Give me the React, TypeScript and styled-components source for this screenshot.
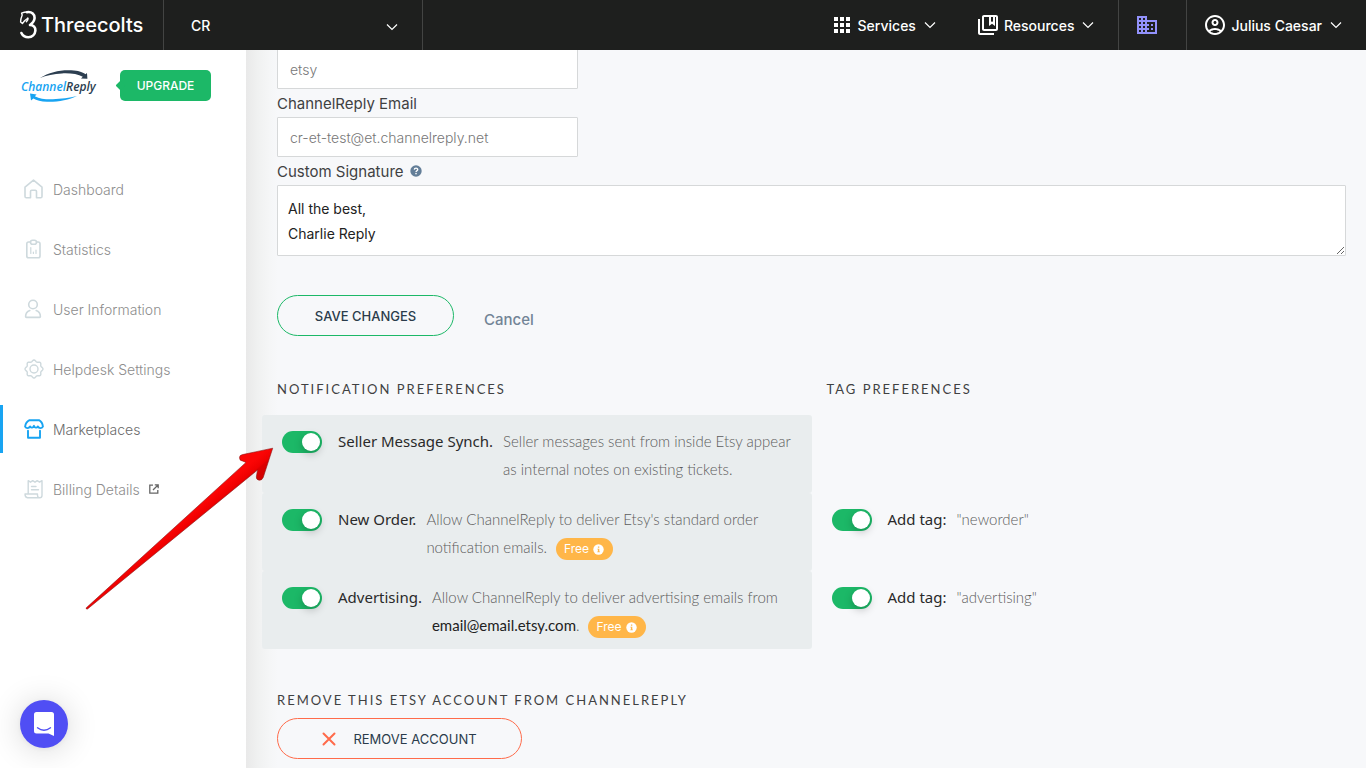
import React from 'react';
import styled, { createGlobalStyle } from 'styled-components';
import { MdApps, MdOutlineCollectionsBookmark, MdBusiness, MdOutlineAccountCircle } from 'react-icons/md';

const GlobalStyle = createGlobalStyle`
  *, *::before, *::after { box-sizing: border-box; }
  body { margin: 0; background: #f7f8fa; color: #333; font-family: Inter, "Liberation Sans", sans-serif; font-size: 14px; }
  button, input, select, textarea { font: inherit; color: inherit; margin: 0; }
  button { cursor: pointer; background: none; border: 0; padding: 0; }
  h2 { margin: 0; }
`;

const Page = styled.div`
  position: relative;
  min-height: 100vh;
  display: flex;
  flex-direction: column;
`;

const Header = styled.header`
  position: sticky;
  top: 0;
  z-index: 2;
  height: 50px;
  display: flex;
  background: #1e1f1e;
  color: #fff;
  font-weight: 500;
`;

const Brand = styled.a`
  width: 164px;
  display: flex;
  align-items: center;
  gap: 3px;
  padding-left: 19px;
  border-right: 1px solid #434443;
  color: inherit;
  font-size: 20px;
  text-decoration: none;
`;

const WorkspacePicker = styled.div`
  position: relative;
  width: 259px;
  border-right: 1px solid #434443;

  svg { position: absolute; right: 24px; top: 23px; pointer-events: none; }
`;

const WorkspaceSelect = styled.select`
  appearance: none;
  width: 100%;
  height: 100%;
  padding: 0 27px;
  border: 0;
  background: transparent;
  outline: none;
`;

const HeaderMenus = styled.nav`
  flex: 1;
  display: flex;
  justify-content: flex-end;
  gap: 40px;
  padding-right: 24px;
`;

const HeaderButton = styled.button<{ $boxed?: boolean }>`
  display: flex;
  align-items: center;
  gap: 4px;
  font-weight: 500;
  white-space: nowrap;
  ${({ $boxed }) => $boxed && 'padding: 0 24px 0 16px; border-left: 1px solid #434443;'}

  svg:last-child { margin-left: 4px; }
`;

const CompanyButton = styled.button`
  width: 68px;
  display: flex;
  align-items: center;
  padding-left: 16px;
  border-left: 1px solid #434443;
  color: #9291fb;
`;

const Body = styled.div`
  flex: 1;
  display: flex;
`;

const Sidebar = styled.aside`
  width: 246px;
  flex-shrink: 0;
  padding-top: 20px;
  background: #fff;
`;

const SidebarTop = styled.div`
  display: flex;
  gap: 20px;
  padding-left: 20px;
`;

const UpgradeButton = styled.button`
  position: relative;
  width: 91px;
  height: 31px;
  border-radius: 5px;
  background: #1cb867;
  color: #fff;
  font-size: 12px;
  font-weight: 500;

  &::before {
    content: '';
    position: absolute;
    left: -3px;
    top: 12px;
    width: 7px;
    height: 7px;
    border-radius: 1px;
    background: inherit;
    transform: rotate(45deg);
  }
`;

const NavList = styled.nav`
  display: flex;
  flex-direction: column;
  gap: 12px;
  margin-top: 63px;
`;

const NavLink = styled.a<{ $active?: boolean }>`
  height: 48px;
  display: flex;
  align-items: center;
  gap: 9px;
  padding-left: 21px;
  border-left: 3px solid ${({ $active }) => ($active ? '#18a4f2' : 'transparent')};
  color: ${({ $active }) => ($active ? '#6a6a6a' : '#8d8d8d')};
  font-weight: 300;
  text-decoration: none;

  > svg:first-child { color: ${({ $active }) => ($active ? '#18a4f2' : '#ced9dd')}; }
`;

const Main = styled.main`
  flex: 1;
  min-width: 0;
  margin-top: -1px;
  padding: 0 20px 9px 31px;
  background: linear-gradient(to right, #e9e9e9 0, #f0f1f1 12px, #f5f6f7 24px, #f7f8fa 32px);
`;

const TextInput = styled.input`
  display: block;
  width: 301px;
  height: 40px;
  padding: 0 12px;
  border: 1px solid #d6d8d9;
  border-radius: 1px;
  background: #fff;
  color: #777;
  font-weight: 300;
`;

const FieldLabel = styled.label`
  display: flex;
  align-items: center;
  gap: 6px;
  height: 28px;
  color: #3f4142;
  font-size: 15px;
`;

const SignatureBox = styled.textarea`
  display: block;
  width: 100%;
  height: 71px;
  padding: 10px;
  border: 1px solid #d6d8d9;
  border-radius: 1px;
  background: #fff;
  color: #222;
  line-height: 25px;
  overflow: hidden;
`;

const FormActions = styled.div`
  display: flex;
  align-items: flex-end;
  gap: 30px;
  margin-top: 39px;
`;

const PillButton = styled.button<{ $danger?: boolean }>`
  width: ${({ $danger }) => ($danger ? '245px' : '177px')};
  height: 41px;
  display: flex;
  align-items: center;
  justify-content: center;
  gap: 17px;
  border: 1px solid ${({ $danger }) => ($danger ? '#ff6b4a' : '#1cb867')};
  border-radius: 21px;
  color: #2b3c4b;
  font-size: 13px;
  font-weight: ${({ $danger }) => ($danger ? 400 : 500)};
`;

const CancelLink = styled.a`
  color: #728496;
  font-size: 15px;
  font-weight: 500;
  line-height: 32px;
  text-decoration: none;
`;

const SectionTitle = styled.h2`
  color: #3f4142;
  font-family: Lato, "Liberation Sans", sans-serif;
  font-size: 13px;
  font-weight: 400;
  line-height: 28px;
  letter-spacing: 2px;
  text-transform: uppercase;
`;

const Preferences = styled.section`
  display: grid;
  grid-template-columns: 1fr 1fr;
  margin: 39px -15px 37px;

  ${SectionTitle} { padding: 0 15px; margin-bottom: 12px; }
`;

const PreferenceCell = styled.div<{ $shaded?: boolean }>`
  min-height: 78px;
  display: flex;
  align-items: flex-start;
  padding: 12px 15px 10px 20px;
  border-radius: 3px;
  background: ${({ $shaded }) => ($shaded ? '#e9edee' : 'transparent')};
  line-height: 28px;
`;

const Toggle = styled.input`
  appearance: none;
  flex-shrink: 0;
  width: 40px;
  height: 22px;
  margin: 4px 16px 0 0;
  padding: 2px;
  border-radius: 11px;
  background: #1cb867;
  cursor: pointer;

  &::before {
    content: '';
    display: block;
    width: 18px;
    height: 18px;
    margin-left: 18px;
    border-radius: 50%;
    background: #fff;
    box-shadow: 0 3px 8px rgba(0, 0, 0, 0.22);
  }
  &:not(:checked) { background: #c4cbcf; }
  &:not(:checked)::before { margin-left: 0; }
`;

const PreferenceName = styled.label`
  margin-right: 10px;
  color: #2a2a2a;
  font-family: "Noto Sans", "Liberation Sans", sans-serif;
  font-size: 15px;
  white-space: nowrap;
`;

const Description = styled.div`
  color: #5c5c5c;
  font-family: Lato, "Liberation Sans", sans-serif;
  font-size: 15px;
  font-weight: 300;

  strong { color: #222; font-weight: 400; }
`;

const FreeBadge = styled.span`
  display: inline-flex;
  align-items: center;
  gap: 4px;
  height: 22px;
  margin-left: 9px;
  padding: 0 9px 0 8px;
  border-radius: 11px;
  background: #ffb648;
  color: #fff;
  font-family: Inter, "Liberation Sans", sans-serif;
  font-size: 12px;
  font-weight: 400;
  line-height: 22px;
  vertical-align: middle;
`;

const RemoveSection = styled.section`
  display: flex;
  flex-direction: column;
  align-items: flex-start;
  gap: 4px;
`;

const ChatButton = styled.button`
  position: fixed;
  left: 20px;
  bottom: 20px;
  z-index: 3;
  width: 48px;
  height: 48px;
  display: flex;
  align-items: center;
  justify-content: center;
  border-radius: 50%;
  background: #504ef4;
  box-shadow: 0 1px 6px rgba(0, 0, 0, 0.06), 0 2px 32px rgba(0, 0, 0, 0.16);
`;

const PointerArrow = styled.svg`
  position: absolute;
  left: 80px;
  top: 440px;
  z-index: 1;
  pointer-events: none;
`;

const Chevron = () => (
  <svg width="12" height="8" viewBox="0 0 12 8" fill="none" stroke="currentColor" strokeWidth="1.2" aria-hidden="true">
    <path d="M1 1.5l5 5 5-5" />
  </svg>
);

const HorseMark = () => (
  <svg width="19" height="30" viewBox="0 0 19 30" fill="none" stroke="#fff" strokeLinecap="round" strokeLinejoin="round" aria-hidden="true">
    <path strokeWidth="1.4" d="M8.500 2C6.500 1.800 4.700 2.300 2.600 3.200L3.200 5C2.200 7.500 1.600 9.600 1.600 12L3.400 13.600 5.600 10.800 8.800 8.200" />
    <path strokeWidth="2.6" d="M8 2.200C13 1.400 15.800 4.600 15.600 8c-.2 3-1.800 5-4.600 7 3.600 0 5.600 2.600 5.400 5.600-.4 3.800-3.200 6.600-7 6.600-3.400 0-5.800-1.600-7-4.200" />
    <path strokeWidth="1.6" d="M8.800 8.200C9.200 9.400 8.600 10.600 7.400 11.600" />
  </svg>
);

const ChannelReplyLogo = () => (
  <svg width="80" height="32" viewBox="0 0 80 32" role="img" aria-label="ChannelReply">
    <path fill="#2c3e50" d="M20 8C30 2 42-.6 54 .6c6 .6 9 2 11.400 3.600L67 3l.4 5.800-6.400-.4 1.800-1.600C58 4 50 3 42 3.400 34 3.800 26 5.400 20 8z" />
    <path fill="#18a4f2" d="M57 26c-8 4-20 6.200-30 5.800-6-.3-10.600-1.600-13.600-3.400L11 30.600 10 23.400l6.600 1-1.800 1.800c5 2.600 11 3.200 18 3 8-.2 17-1.400 24.200-3.200z" />
    <text x="1" y="21" fontFamily='"Open Sans", sans-serif' fontSize="12" fontWeight="600" fontStyle="italic">
      <tspan fill="#18a4f2">Channel</tspan>
      <tspan fill="#2c3e50">Reply</tspan>
    </text>
  </svg>
);

const NavIcon = ({ children }: { children: React.ReactNode }) => (
  <svg width="20" height="20" viewBox="0 0 20 20" fill="none" stroke="currentColor" strokeWidth="1.6" strokeLinecap="round" strokeLinejoin="round" aria-hidden="true">
    {children}
  </svg>
);

const gear = Array.from({ length: 65 }, (_, i) => {
  const angle = (i / 64) * Math.PI * 2;
  const radius = 8.2 + 0.8 * Math.cos(angle * 8);
  return `${(10 + radius * Math.cos(angle)).toFixed(2)},${(10 + radius * Math.sin(angle)).toFixed(2)}`;
}).join(' ');

const navItems = [
  {
    label: 'Dashboard',
    icon: <path d="M1 8.200L9.500 1.200 18 8.200V17.500q0 1.300-1.300 1.300H12.500V12.500q0-1.200-1.200-1.200H7.700q-1.200 0-1.200 1.200V18.800H2.300Q1 18.800 1 17.500z" />,
  },
  {
    label: 'Statistics',
    icon: (
      <>
        <path d="M6.500 3H4.600Q2.800 3 2.800 4.800V17q0 1.800 1.800 1.800h9.600q1.800 0 1.800-1.800V4.800Q16 3 14.200 3h-1.700" />
        <rect x="6.500" y="1.300" width="6" height="4" rx="2" />
        <path strokeWidth="1.200" d="M6.800 8.500v6M9.400 13v1.500M12 11v3.500" />
      </>
    ),
  },
  {
    label: 'User Information',
    icon: (
      <>
        <circle cx="9" cy="5.500" r="4.300" />
        <path d="M5.800 11.500C3 12.500 1.600 14.500 1.600 17.500q0 .9.900.9h13q.9 0 .9-.9c0-3-1.400-5-4.200-6" />
      </>
    ),
  },
  {
    label: 'Helpdesk Settings',
    icon: (
      <>
        <polygon strokeWidth="1.400" points={gear} />
        <circle cx="10" cy="10" r="4" strokeWidth="1.400" />
      </>
    ),
  },
  {
    label: 'Marketplaces',
    active: true,
    icon: (
      <>
        <path strokeWidth="1.900" d="M5.500 1.200h9.500c2 1 3.600 3.500 3.900 6.400-1.200 2.200-4 2-5-.2-1 1.700-3 1.700-4-.6-1 2.300-2.600 2.300-3.900.6-1 2.200-3.800 2.400-4.900.2C1.500 4.700 3.300 2.200 5.500 1.200z" />
        <path strokeWidth="1.900" d="M4 11.700v7h12v-7" />
      </>
    ),
  },
  {
    label: 'Billing Details',
    external: true,
    icon: (
      <path strokeWidth="1.400" d="M4.200 14V1.700l2.300 1.500 2.200-1.500 2.300 1.500 2.200-1.500 2.300 1.500 2.500-1.500V16.500q0 2.300-2.300 2.300H3.500Q1 18.500 1 15h12.500v1.500q.2 2.200 2.200 2.200M7.500 7.500h4.500M7.500 10.800h7" />
    ),
  },
];

const ExternalIcon = () => (
  <svg width="10" height="10" viewBox="0 0 10 10" fill="none" stroke="#666" strokeWidth="1.300" aria-hidden="true">
    <path d="M4 1.200H.8v8h8V6M5.800.8h3.400v3.400M9 1L4 6" />
  </svg>
);

const Free = () => (
  <FreeBadge>
    Free
    <svg width="11" height="11" viewBox="0 0 11 11" aria-hidden="true">
      <circle cx="5.500" cy="5.500" r="5.200" fill="#fff" />
      <path fill="#ffb648" d="M4.900 2.500h1.400v1.300H4.900zM4.400 4.700h1.900v2.700h.6v.9H4.300v-.9h.6V5.600h-.5z" />
    </svg>
  </FreeBadge>
);

export default function App() {
  return (
    <Page>
      <GlobalStyle />
      <Header>
        <Brand href="#">
          <HorseMark />
          Threecolts
        </Brand>
        <WorkspacePicker>
          <WorkspaceSelect aria-label="Workspace" defaultValue="CR">
            <option>CR</option>
          </WorkspaceSelect>
          <Chevron />
        </WorkspacePicker>
        <HeaderMenus>
          <HeaderButton>
            <MdApps size={24} />
            Services
            <Chevron />
          </HeaderButton>
          <HeaderButton>
            <MdOutlineCollectionsBookmark size={24} />
            Resources
            <Chevron />
          </HeaderButton>
        </HeaderMenus>
        <CompanyButton aria-label="Company">
          <MdBusiness size={24} />
        </CompanyButton>
        <HeaderButton $boxed>
          <MdOutlineAccountCircle size={24} />
          Julius Caesar
          <Chevron />
        </HeaderButton>
      </Header>

      <Body>
        <Sidebar>
          <SidebarTop>
            <ChannelReplyLogo />
            <UpgradeButton>UPGRADE</UpgradeButton>
          </SidebarTop>
          <NavList>
            {navItems.map((item) => (
              <NavLink key={item.label} href="#" $active={item.active}>
                <NavIcon>{item.icon}</NavIcon>
                {item.label}
                {item.external && <ExternalIcon />}
              </NavLink>
            ))}
          </NavList>
        </Sidebar>

        <Main>
          <TextInput aria-label="Account name" defaultValue="etsy" />
          <FieldLabel htmlFor="email">ChannelReply Email</FieldLabel>
          <TextInput id="email" defaultValue="cr-et-test@et.channelreply.net" />
          <FieldLabel htmlFor="signature">
            Custom Signature
            <svg width="12" height="12" viewBox="0 0 12 12" aria-hidden="true">
              <circle cx="6" cy="6" r="5.700" fill="#637e98" />
              <path d="M4.300 4.600C4.400 2.600 7.700 2.600 7.700 4.500 7.700 5.700 6 5.700 6 7" fill="none" stroke="#fff" strokeWidth="1.400" />
              <rect x="5.300" y="7.900" width="1.400" height="1.400" fill="#fff" />
            </svg>
          </FieldLabel>
          <SignatureBox id="signature" defaultValue={'All the best,\nCharlie Reply'} />

          <FormActions>
            <PillButton>SAVE CHANGES</PillButton>
            <CancelLink href="#">Cancel</CancelLink>
          </FormActions>

          <Preferences>
            <SectionTitle>Notification preferences</SectionTitle>
            <SectionTitle>Tag preferences</SectionTitle>

            <PreferenceCell $shaded>
              <Toggle type="checkbox" id="seller-sync" defaultChecked />
              <PreferenceName htmlFor="seller-sync">Seller Message Synch.</PreferenceName>
              <Description>
                Seller messages sent from inside Etsy appear as internal notes on existing tickets.
              </Description>
            </PreferenceCell>
            <PreferenceCell />

            <PreferenceCell $shaded>
              <Toggle type="checkbox" id="new-order" defaultChecked />
              <PreferenceName htmlFor="new-order">New Order.</PreferenceName>
              <Description>
                Allow ChannelReply to deliver Etsy's standard order notification emails.
                <Free />
              </Description>
            </PreferenceCell>
            <PreferenceCell>
              <Toggle type="checkbox" id="tag-new-order" defaultChecked />
              <PreferenceName htmlFor="tag-new-order">Add tag:</PreferenceName>
              <Description>"neworder"</Description>
            </PreferenceCell>

            <PreferenceCell $shaded>
              <Toggle type="checkbox" id="advertising" defaultChecked />
              <PreferenceName htmlFor="advertising">Advertising.</PreferenceName>
              <Description>
                Allow ChannelReply to deliver advertising emails from <strong>email@email.etsy.com</strong>.
                <Free />
              </Description>
            </PreferenceCell>
            <PreferenceCell>
              <Toggle type="checkbox" id="tag-advertising" defaultChecked />
              <PreferenceName htmlFor="tag-advertising">Add tag:</PreferenceName>
              <Description>"advertising"</Description>
            </PreferenceCell>
          </Preferences>

          <RemoveSection>
            <SectionTitle>Remove this Etsy account from ChannelReply</SectionTitle>
            <PillButton $danger>
              <svg width="14" height="14" viewBox="0 0 14 14" stroke="#ff6b4a" strokeWidth="2" strokeLinecap="round" aria-hidden="true">
                <path d="M1.500 1.500l11 11M12.500 1.500l-11 11" />
              </svg>
              REMOVE ACCOUNT
            </PillButton>
          </RemoveSection>
        </Main>
      </Body>

      <PointerArrow width="200" height="175" viewBox="0 0 200 175" aria-hidden="true">
        <defs>
          <linearGradient id="arrowRed" gradientUnits="userSpaceOnUse" x1="100" y1="82" x2="110" y2="94">
            <stop offset="0" stopColor="#fb0505" />
            <stop offset="0.500" stopColor="#ee0000" />
            <stop offset="0.600" stopColor="#dc0000" />
            <stop offset="1" stopColor="#d40000" />
          </linearGradient>
        </defs>
        <path
          fill="url(#arrowRed)"
          stroke="#8c1a1a"
          strokeWidth="0.600"
          d="M6.300 167.800L166 22.400 162.500 21 q-2.800 0-3-3.300 0-2.600 3-3.100L192.700 8.200 183.200 37.500q-1 2.800-4 2.700-3-.4-2.900-3.200L177.500 30 7.500 169q-1.800.4-1.200-1.200z"
        />
      </PointerArrow>

      <ChatButton aria-label="Open chat">
        <svg width="22" height="26" viewBox="0 0 22 26" aria-hidden="true">
          <path fill="#fff" d="M3.500 1h15Q21 1 21 3.500V25l-5.500-2.600h-12Q1 22.400 1 19.900V3.500Q1 1 3.500 1z" />
          <path d="M4.500 16.800c4 3 9 3 13 0" fill="none" stroke="#504ef4" strokeWidth="1.400" strokeLinecap="round" />
        </svg>
      </ChatButton>
    </Page>
  );
}
